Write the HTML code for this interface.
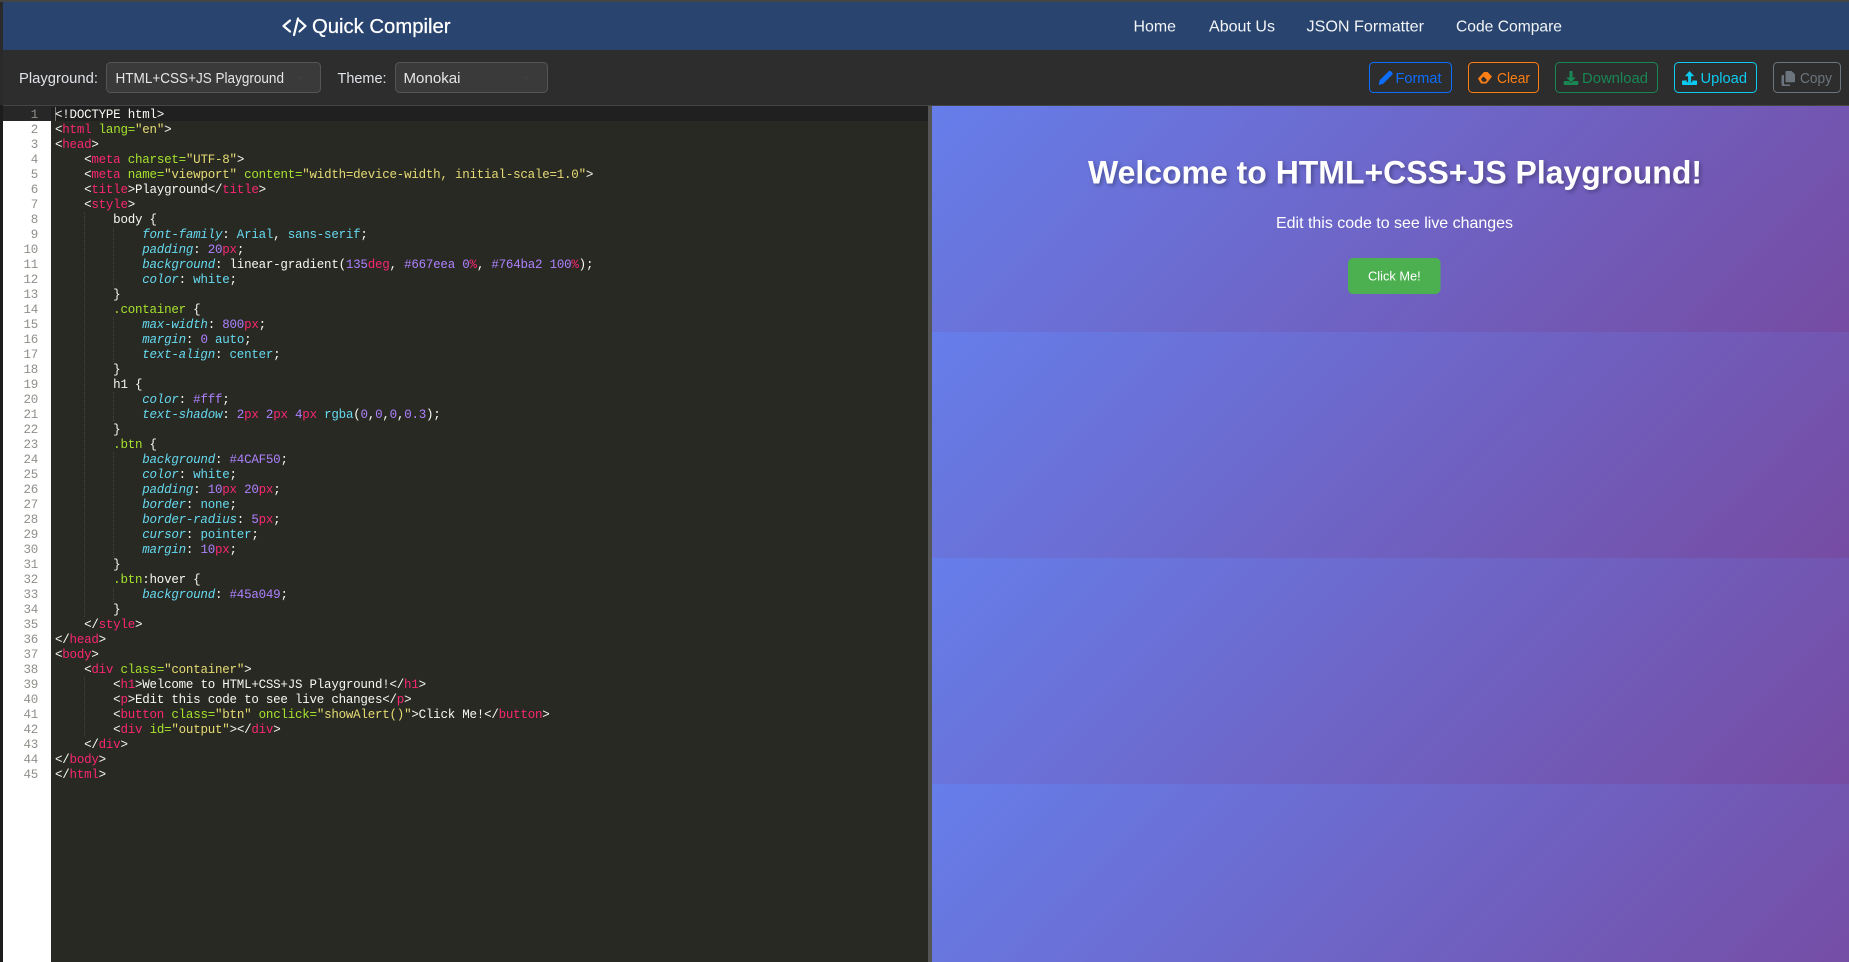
<!DOCTYPE html>
<html lang="en"><head><meta charset="UTF-8"><title>Quick Compiler</title>
<style>
html,body{margin:0;padding:0;width:1849px;height:962px;overflow:hidden;background:#1c1c1c}
#page{position:relative;width:1849px;height:962px;overflow:hidden;background:#1c1c1c}
.abs{position:absolute}
svg{position:absolute;left:0;top:0}
svg text{font-family:"Liberation Sans",sans-serif}
pre{margin:0;position:absolute;font-family:"Liberation Mono",monospace;font-size:12.5px;line-height:15px;letter-spacing:-.23px}
#code{left:55px;top:108px;color:#f8f8f2}
#nums{left:3px;top:108px;width:35px;text-align:right;color:#8f908a}
.t{color:#f92672}.a{color:#a6e22e}.s{color:#e6db74}.n{color:#ae81ff}.v{color:#66d9ef}.c{color:#66d9ef;font-style:italic}
.g{position:absolute;width:1px;background-image:repeating-linear-gradient(to bottom,rgba(255,255,255,.13) 0 1px,transparent 1px 2px)}
.pv{position:absolute;left:932px;width:925px;height:226px;background:linear-gradient(135deg,#667eea 0%,#764ba2 100%)}
</style></head><body><div id="page">
<div class="abs" style="left:0;top:0;width:1849px;height:2px;background:#444"></div>
<div class="abs" style="left:3px;top:2px;width:1846px;height:48px;background:#28446f"></div>
<div class="abs" style="left:0;top:2px;width:3px;height:103px;background:#2a2a2a"></div>
<div class="abs" style="left:3px;top:50px;width:1846px;height:55px;background:#2d2d2d"></div>
<div class="abs" style="left:3px;top:105px;width:1846px;height:1px;background:#444"></div>
<div class="abs" style="left:3px;top:106px;width:48px;height:856px;background:#fff"></div>
<div class="abs" style="left:3px;top:106px;width:48px;height:15px;background:#272727"></div>
<div class="abs" style="left:51px;top:106px;width:877px;height:856px;background:#282923"></div>
<div class="abs" style="left:51px;top:106px;width:877px;height:15px;background:#202020"></div>
<div class="abs" style="left:55px;top:107px;width:1px;height:14px;background:#7a7a75"></div>
<div class="abs" style="left:928px;top:106px;width:4px;height:856px;background:#555"></div>
<div class="pv" style="top:106px"></div><div class="pv" style="top:332px"></div><div class="pv" style="top:558px"></div><div class="pv" style="top:784px"></div>

<div class="g" style="left:84px;top:212px;height:405px"></div>
<div class="g" style="left:84px;top:677px;height:60px"></div>
<div class="g" style="left:113px;top:227px;height:60px"></div>
<div class="g" style="left:113px;top:317px;height:45px"></div>
<div class="g" style="left:113px;top:392px;height:30px"></div>
<div class="g" style="left:113px;top:452px;height:105px"></div>
<div class="g" style="left:113px;top:587px;height:15px"></div>

<pre id="nums">1
2
3
4
5
6
7
8
9
10
11
12
13
14
15
16
17
18
19
20
21
22
23
24
25
26
27
28
29
30
31
32
33
34
35
36
37
38
39
40
41
42
43
44
45</pre>
<pre id="code">&lt;!DOCTYPE html&gt;
&lt;<span class="t">html</span> <span class="a">lang=</span><span class="s">"en"</span>&gt;
&lt;<span class="t">head</span>&gt;
    &lt;<span class="t">meta</span> <span class="a">charset=</span><span class="s">"UTF-8"</span>&gt;
    &lt;<span class="t">meta</span> <span class="a">name=</span><span class="s">"viewport"</span> <span class="a">content=</span><span class="s">"width=device-width, initial-scale=1.0"</span>&gt;
    &lt;<span class="t">title</span>&gt;Playground&lt;/<span class="t">title</span>&gt;
    &lt;<span class="t">style</span>&gt;
        body {
            <span class="c">font-family</span>: <span class="v">Arial</span>, <span class="v">sans-serif</span>;
            <span class="c">padding</span>: <span class="n">20</span><span class="t">px</span>;
            <span class="c">background</span>: linear-gradient(<span class="n">135</span><span class="t">deg</span>, <span class="n">#667eea</span> <span class="n">0</span><span class="t">%</span>, <span class="n">#764ba2</span> <span class="n">100</span><span class="t">%</span>);
            <span class="c">color</span>: <span class="v">white</span>;
        }
        <span class="a">.container</span> {
            <span class="c">max-width</span>: <span class="n">800</span><span class="t">px</span>;
            <span class="c">margin</span>: <span class="n">0</span> <span class="v">auto</span>;
            <span class="c">text-align</span>: <span class="v">center</span>;
        }
        h1 {
            <span class="c">color</span>: <span class="n">#fff</span>;
            <span class="c">text-shadow</span>: <span class="n">2</span><span class="t">px</span> <span class="n">2</span><span class="t">px</span> <span class="n">4</span><span class="t">px</span> <span class="v">rgba</span>(<span class="n">0</span>,<span class="n">0</span>,<span class="n">0</span>,<span class="n">0.3</span>);
        }
        <span class="a">.btn</span> {
            <span class="c">background</span>: <span class="n">#4CAF50</span>;
            <span class="c">color</span>: <span class="v">white</span>;
            <span class="c">padding</span>: <span class="n">10</span><span class="t">px</span> <span class="n">20</span><span class="t">px</span>;
            <span class="c">border</span>: <span class="v">none</span>;
            <span class="c">border-radius</span>: <span class="n">5</span><span class="t">px</span>;
            <span class="c">cursor</span>: <span class="v">pointer</span>;
            <span class="c">margin</span>: <span class="n">10</span><span class="t">px</span>;
        }
        <span class="a">.btn</span>:hover {
            <span class="c">background</span>: <span class="n">#45a049</span>;
        }
    &lt;/<span class="t">style</span>&gt;
&lt;/<span class="t">head</span>&gt;
&lt;<span class="t">body</span>&gt;
    &lt;<span class="t">div</span> <span class="a">class=</span><span class="s">"container"</span>&gt;
        &lt;<span class="t">h1</span>&gt;Welcome to HTML+CSS+JS Playground!&lt;/<span class="t">h1</span>&gt;
        &lt;<span class="t">p</span>&gt;Edit this code to see live changes&lt;/<span class="t">p</span>&gt;
        &lt;<span class="t">button</span> <span class="a">class=</span><span class="s">"btn"</span> <span class="a">onclick=</span><span class="s">"showAlert()"</span>&gt;Click Me!&lt;/<span class="t">button</span>&gt;
        &lt;<span class="t">div</span> <span class="a">id=</span><span class="s">"output"</span>&gt;&lt;/<span class="t">div</span>&gt;
    &lt;/<span class="t">div</span>&gt;
&lt;/<span class="t">body</span>&gt;
&lt;/<span class="t">html</span>&gt;</pre>

<svg width="1849" height="962" viewBox="0 0 1849 962">
<defs><filter id="sh" x="-5%" y="-30%" width="110%" height="170%"><feGaussianBlur stdDeviation="2"/></filter></defs>
<!-- nav -->
<g fill="none" stroke="#fff" stroke-width="2.2" stroke-linecap="round" stroke-linejoin="round">
<path d="M290 20.500L283.500 26L290 31.500"/><path d="M298 18.500L294 35"/><path d="M299.500 20.500L305.500 26L299.500 31.500"/>
</g>
<text x="312" y="33" font-size="20" fill="#fff" stroke="#fff" stroke-width=".25" textLength="138.500" lengthAdjust="spacingAndGlyphs">Quick Compiler</text>
<g font-size="16" fill="#f2f4f7">
<text x="1133.500" y="31.500" textLength="42.500" lengthAdjust="spacingAndGlyphs">Home</text>
<text x="1209" y="31.500" textLength="66" lengthAdjust="spacingAndGlyphs">About Us</text>
<text x="1306.500" y="31.500" textLength="117.500" lengthAdjust="spacingAndGlyphs">JSON Formatter</text>
<text x="1456" y="31.500" textLength="106" lengthAdjust="spacingAndGlyphs">Code Compare</text>
</g>
<!-- toolbar left -->
<g font-size="15" fill="#dfe3e8">
<text x="19" y="83" textLength="79" lengthAdjust="spacingAndGlyphs">Playground:</text>
<text x="337.500" y="83" textLength="49" lengthAdjust="spacingAndGlyphs">Theme:</text>
</g>
<rect x="106.500" y="62.500" width="214" height="30" rx="4" fill="#3a3a3a" stroke="#555"/>
<rect x="395.500" y="62.500" width="152" height="30" rx="4" fill="#3a3a3a" stroke="#555"/>
<g font-size="15" fill="#e6e6e6">
<text x="115.500" y="83" textLength="168.500" lengthAdjust="spacingAndGlyphs">HTML+CSS+JS Playground</text>
<text x="403.500" y="83" textLength="57" lengthAdjust="spacingAndGlyphs">Monokai</text>
</g>
<path d="M297 76l3 3 3-3M523 76l3 3 3-3" fill="none" stroke="#414141" stroke-width="1.200"/>
<!-- buttons -->
<g fill="none">
<rect x="1369.500" y="62.500" width="82" height="30" rx="4" stroke="#0d6efd"/>
<rect x="1468.500" y="62.500" width="70" height="30" rx="4" stroke="#fd7e14"/>
<rect x="1555.500" y="62.500" width="102" height="30" rx="4" stroke="#198754"/>
<rect x="1674.500" y="62.500" width="82" height="30" rx="4" stroke="#0dcaf0"/>
<rect x="1773.500" y="62.500" width="67" height="30" rx="4" stroke="#6c757d"/>
</g>
<g font-size="14.500">
<text x="1395.500" y="83" fill="#0d6efd" textLength="46" lengthAdjust="spacingAndGlyphs">Format</text>
<text x="1497" y="83" fill="#fd7e14" textLength="33" lengthAdjust="spacingAndGlyphs">Clear</text>
<text x="1582" y="83" fill="#198754" textLength="66" lengthAdjust="spacingAndGlyphs">Download</text>
<text x="1700.500" y="83" fill="#0dcaf0" textLength="46.500" lengthAdjust="spacingAndGlyphs">Upload</text>
<text x="1800" y="83" fill="#6c757d" textLength="32" lengthAdjust="spacingAndGlyphs">Copy</text>
</g>
<!-- pen -->
<path d="M1388.500 71.500a1.800 1.800 0 0 1 2.600 0l.9.9a1.800 1.800 0 0 1 0 2.600l-8.800 8.800-4.500 1.200 1-4.700z" fill="#0d6efd"/>
<!-- eraser -->
<path d="M1478 78.500l6-6.500h3.500l4.500 4.500-5.500 7h-5.500z" fill="#fd7e14"/>
<path d="M1481 79l2.500-2.500 3.500 3.500-1.500 1.800h-3z" fill="#2d2d2d"/>
<!-- download -->
<path d="M1569.500 71h3v6.500h3.200l-4.700 5-4.700-5h3.200z" fill="#198754"/>
<path d="M1564 81h4.500l2.500 2 2.500-2h4q.8 0 .8 1v2q0 1-.8 1h-13q-.8 0-.8-1v-2q0-1 .8-1z" fill="#198754"/>
<!-- upload -->
<path d="M1689.500 71l4.800 5.200h-3.200v6h-3v-6h-3.200z" fill="#0dcaf0"/>
<path d="M1682.800 80.500h4v1.800h5.500v-1.800h4q.8 0 .8 1v2.500q0 1-.8 1h-13.500q-.8 0-.8-1v-2.500q0-1 .8-1z" fill="#0dcaf0"/>
<!-- copy -->
<path d="M1786.500 71h5l3.500 3.300v7q0 1-1 1h-7.500q-1 0-1-1v-9.300q0-1 1-1z" fill="#6c757d"/>
<path d="M1784 75v8.500q0 1 1 1h5v1.500h-7q-1.500 0-1.500-1.500v-8q0-1.500 1.500-1.500z" fill="#6c757d"/>
<!-- preview -->
<text x="1090" y="185.300" font-size="32" font-weight="700" fill="#000" fill-opacity=".3" filter="url(#sh)" textLength="614" lengthAdjust="spacingAndGlyphs">Welcome to HTML+CSS+JS Playground!</text>
<text x="1088" y="183.300" font-size="32" font-weight="700" fill="#fff" textLength="614" lengthAdjust="spacingAndGlyphs">Welcome to HTML+CSS+JS Playground!</text>
<text x="1276" y="228" font-size="16" fill="#fff" textLength="237" lengthAdjust="spacingAndGlyphs">Edit this code to see live changes</text>
<rect x="1348" y="258" width="92.500" height="36" rx="5" fill="#4caf50"/>
<text x="1368" y="280.500" font-size="13.330" fill="#fff" textLength="52.700" lengthAdjust="spacingAndGlyphs">Click Me!</text>
</svg>
</div></body></html>
